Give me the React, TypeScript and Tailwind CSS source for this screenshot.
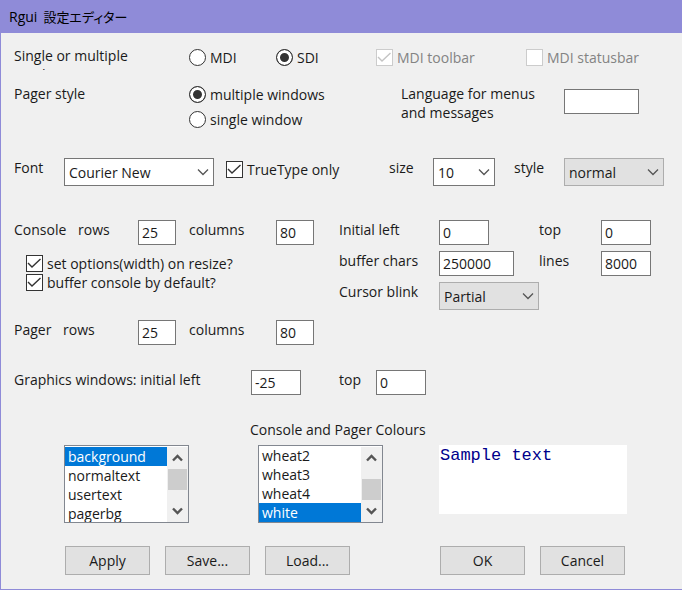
import React from "react";

type Choice = { label: string; checked?: boolean; disabled?: boolean };

function Radio({ name, label, checked }: Choice & { name: string }) {
  return (
    <label className="flex h-[17px] items-center gap-1 whitespace-nowrap">
      <input
        type="radio"
        name={name}
        defaultChecked={checked}
        className="size-[17px] shrink-0 appearance-none rounded-full border border-[#333] bg-white checked:bg-[#333] checked:shadow-[inset_0_0_0_3px_#fff]"
      />
      {label}
    </label>
  );
}

function Check({ label, checked, disabled }: Choice) {
  return (
    <label className="flex h-[19px] items-center gap-1 whitespace-nowrap has-disabled:text-[#838383]">
      <span className="grid size-[17px] shrink-0">
        <input
          type="checkbox"
          defaultChecked={checked}
          disabled={disabled}
          className="peer col-start-1 row-start-1 size-[17px] appearance-none border border-[#333] bg-white disabled:border-[#ccc]"
        />
        <svg
          viewBox="0 0 17 17"
          fill="none"
          stroke="currentColor"
          strokeWidth="1.4"
          className="pointer-events-none invisible col-start-1 row-start-1 size-[17px] text-[#333] peer-checked:visible peer-disabled:text-[#c4c4c4]"
        >
          <path d="M2 8 6 12 14.5 4" />
        </svg>
      </span>
      {label}
    </label>
  );
}

function TextBox({ id, value, width }: { id: string; value: string; width: string }) {
  return (
    <input
      id={id}
      type="text"
      defaultValue={value}
      className={`h-[25px] border border-[#767676] bg-white px-[3px] outline-none ${width}`}
    />
  );
}

function DropDown({
  id,
  options,
  width,
  look,
}: {
  id: string;
  options: string[];
  width: string;
  look: string;
}) {
  return (
    <span className={`grid h-7 ${width}`}>
      <select
        id={id}
        className={`col-start-1 row-start-1 h-7 w-full appearance-none border px-1 outline-none ${look}`}
      >
        {options.map((o) => (
          <option key={o}>{o}</option>
        ))}
      </select>
      <svg
        viewBox="0 0 12 8"
        fill="none"
        stroke="#555"
        strokeWidth="1.3"
        className="pointer-events-none col-start-1 row-start-1 mr-[5px] h-2 w-3 self-center justify-self-end"
      >
        <path d="M1 1.5 6 6.5 11 1.5" />
      </svg>
    </span>
  );
}

const editable = "border-[#767676] bg-white";
const closed = "border-[#adadad] bg-[#e1e1e1]";

function ListBox({
  label,
  options,
  selected,
  thumb,
}: {
  label: string;
  options: string[];
  selected: string;
  thumb: string;
}) {
  return (
    <div className="flex h-[78px] w-[125px] border border-[#828790] bg-white pt-px">
      <select
        size={4}
        aria-label={label}
        defaultValue={selected}
        className="h-[75px] min-w-0 flex-1 overflow-hidden bg-white outline-none [scrollbar-width:none]"
      >
        {options.map((o) => (
          <option
            key={o}
            className="h-[19px] min-h-0 px-[3px] py-0 leading-[19px] checked:bg-[#0078d7] checked:bg-linear-to-r checked:from-[#0078d7] checked:to-[#0078d7] checked:[-webkit-text-fill-color:#fff]"
          >
            {o}
          </option>
        ))}
      </select>
      <div aria-hidden="true" className="flex w-[21px] flex-col items-center bg-[#f0f0f0]">
        <svg viewBox="0 0 11 8" fill="none" stroke="#555" strokeWidth="2.4" className="my-[7px] h-2 w-[11px] shrink-0">
          <path d="M1 6.5 5.5 2 10 6.5" />
        </svg>
        <div className="flex w-full flex-1 flex-col px-px">
          <div className={`h-[21px] bg-[#cdcdcd] ${thumb}`} />
        </div>
        <svg viewBox="0 0 11 8" fill="none" stroke="#555" strokeWidth="2.4" className="my-[7px] h-2 w-[11px] shrink-0">
          <path d="M1 1.5 5.5 6 10 1.5" />
        </svg>
      </div>
    </div>
  );
}

function PushButton({ children, className = "" }: { children: React.ReactNode; className?: string }) {
  return (
    <button
      type="button"
      className={`h-[29px] w-[85px] border border-[#adadad] bg-[#e1e1e1] hover:border-[#0078d7] hover:bg-[#e5f1fb] ${className}`}
    >
      {children}
    </button>
  );
}

export default function App() {
  return (
    <div className="flex min-h-screen flex-col border-b border-l border-[#8f8bd8] bg-[#f0f0f0] font-['Open_Sans','Noto_Sans_CJK_JP',sans-serif] text-[14px] leading-[19px] text-[#1a1a1a]">
      <header className="flex h-[33px] items-center bg-[#8f8bd8] px-2 text-black">
        <h1 className="flex items-baseline gap-1.5">
          Rgui <span className="text-[13px] [font-feature-settings:'palt']">設定エディター</span>
        </h1>
      </header>

      <form className="flex flex-col px-[13px] pt-[13px]">
        <div className="grid h-[38px] grid-cols-[175px_87px_100px_150px_1fr] items-start">
          <div className="h-6 w-[130px] overflow-hidden">Single or multiple windows</div>
          <div className="pt-[3px]"><Radio name="mode" label="MDI" /></div>
          <div className="pt-[3px]"><Radio name="mode" label="SDI" checked /></div>
          <div className="pt-[2px]"><Check label="MDI toolbar" checked disabled /></div>
          <div className="pt-[2px]"><Check label="MDI statusbar" disabled /></div>
        </div>

        <div className="grid h-[74px] grid-cols-[175px_212px_163px_1fr] items-start">
          <div>Pager style</div>
          <div className="flex flex-col gap-2 pt-[2px]">
            <Radio name="pager" label="multiple windows" checked />
            <Radio name="pager" label="single window" />
          </div>
          <label htmlFor="lang" className="w-[150px]">Language for menus and messages</label>
          <div className="flex pt-[5px]"><TextBox id="lang" value="" width="w-[75px]" /></div>
        </div>

        <div className="grid h-[62px] grid-cols-[50px_162px_163px_44px_81px_50px_1fr] items-start">
          <label htmlFor="font">Font</label>
          <DropDown id="font" width="w-[150px]" look={editable} options={["Courier New", "Consolas", "Lucida Console"]} />
          <div className="pt-[2px]"><Check label="TrueType only" checked /></div>
          <label htmlFor="size">size</label>
          <DropDown id="size" width="w-[62px]" look={editable} options={["10", "11", "12"]} />
          <label htmlFor="style">style</label>
          <DropDown id="style" width="w-[100px]" look={closed} options={["normal", "bold", "italic"]} />
        </div>

        <div className="grid h-[100px] grid-cols-[325px_1fr] items-start">
          <div>
            <div className="grid h-[34px] grid-cols-[64px_60px_51px_87px_1fr] items-start">
              <div>Console</div>
              <label htmlFor="crows">rows</label>
              <TextBox id="crows" value="25" width="w-[38px]" />
              <label htmlFor="ccols">columns</label>
              <TextBox id="ccols" value="80" width="w-[38px]" />
            </div>
            <div className="flex flex-col pl-3">
              <Check label="set options(width) on resize?" checked />
              <Check label="buffer console by default?" checked />
            </div>
          </div>
          <div className="grid grid-cols-[100px_100px_62px_1fr] items-start gap-y-[6px]">
            <label htmlFor="left">Initial left</label>
            <TextBox id="left" value="0" width="w-[50px]" />
            <label htmlFor="top">top</label>
            <TextBox id="top" value="0" width="w-[50px]" />
            <label htmlFor="chars">buffer chars</label>
            <TextBox id="chars" value="250000" width="w-[75px]" />
            <label htmlFor="lines">lines</label>
            <TextBox id="lines" value="8000" width="w-[50px]" />
            <label htmlFor="blink">Cursor blink</label>
            <DropDown id="blink" width="w-[100px]" look={closed} options={["Partial", "None", "Full"]} />
          </div>
        </div>

        <div className="grid h-[50px] grid-cols-[49px_75px_51px_87px_1fr] items-start">
          <div>Pager</div>
          <label htmlFor="prows">rows</label>
          <TextBox id="prows" value="25" width="w-[38px]" />
          <label htmlFor="pcols">columns</label>
          <TextBox id="pcols" value="80" width="w-[38px]" />
        </div>

        <div className="grid h-[50px] grid-cols-[237px_88px_37px_1fr] items-start">
          <label htmlFor="gleft">Graphics windows: initial left</label>
          <TextBox id="gleft" value="-25" width="w-[50px]" />
          <label htmlFor="gtop">top</label>
          <TextBox id="gtop" value="0" width="w-[50px]" />
        </div>

        <h2 className="h-[25px] pl-[236px]">Console and Pager Colours</h2>

        <div className="grid h-[101px] grid-cols-[194px_181px_1fr] items-start pl-[50px]">
          <ListBox label="Item" options={["background", "normaltext", "usertext", "pagerbg"]} selected="background" thumb="" />
          <ListBox label="Colour" options={["wheat2", "wheat3", "wheat4", "white"]} selected="white" thumb="mt-auto" />
          <output className="block h-[69px] w-[188px] bg-white px-px pt-px font-['Liberation_Mono',monospace] text-[17px] text-[#00008b]">
            Sample text
          </output>
        </div>

        <div className="flex gap-[15px] pl-[51px]">
          <PushButton>Apply</PushButton>
          <PushButton>Save...</PushButton>
          <PushButton>Load...</PushButton>
          <PushButton className="ml-[75px]">OK</PushButton>
          <PushButton>Cancel</PushButton>
        </div>
      </form>
    </div>
  );
}
